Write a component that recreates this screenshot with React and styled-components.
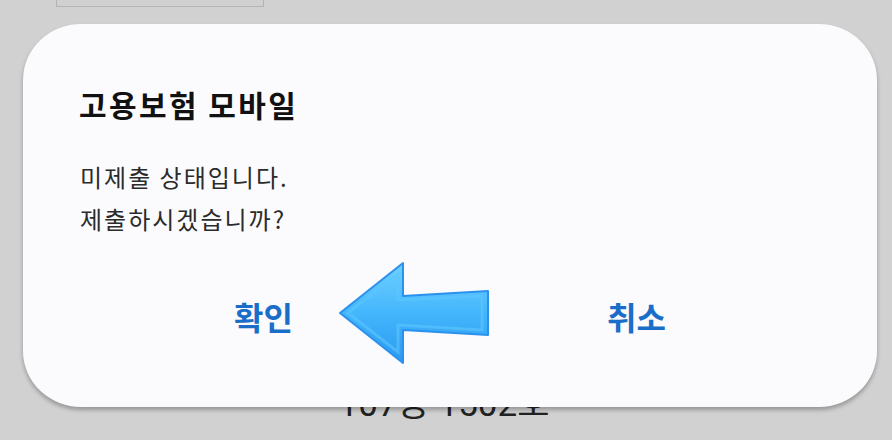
import React from 'react';
import styled, { createGlobalStyle } from 'styled-components';

const Global = createGlobalStyle`
  html, body {
    margin: 0;
    padding: 0;
    background: #d1d1d1;
    overflow: hidden;
  }
  * { box-sizing: border-box; }
`;

const Screen = styled.div`
  position: relative;
  width: 892px;
  height: 440px;
  overflow: hidden;
  background: #d1d1d1;
  font-family: Roboto, "Noto Sans CJK KR", sans-serif;
`;

const Backdrop = styled.div`
  height: 100%;
  display: flex;
  flex-direction: column;
  justify-content: space-between;
`;

const FieldBox = styled.div`
  margin: -41px 0 0 56px;
  width: 208px;
  height: 48px;
  border: 1px solid #b3b3b3;
  background: #d0d0d0;
`;

const Address = styled.div`
  text-align: center;
  padding: 0 0 14px 0;
  font-size: 35px;
  line-height: 42px;
  color: #222;
  margin-left: -4px;
`;

const Dialog = styled.div`
  position: absolute;
  left: 23px;
  top: 24px;
  width: 854px;
  height: 383px;
  border-radius: 58px / 56px;
  background: #fbfbfd;
  box-shadow: 0 3px 4px rgba(0, 0, 0, 0.28);
  display: flex;
  flex-direction: column;
  padding: 60px 0 0;
`;

const Title = styled.h2`
  margin: 0;
  padding: 0 56px;
  font-family: "Noto Sans CJK KR", sans-serif;
  font-weight: 700;
  font-size: 30px;
  line-height: 40px;
  letter-spacing: 2.4px;
  color: #111;
`;

const Message = styled.p`
  margin: 32px 0 0;
  padding: 0 57px;
  font-family: "Noto Sans CJK KR", sans-serif;
  font-size: 24px;
  line-height: 42px;
  letter-spacing: 2px;
  color: #2b2b2b;
`;

const Actions = styled.div`
  margin-top: 54px;
  padding: 0 54px;
  display: grid;
  grid-template-columns: 1fr 1fr;
`;

const ActionButton = styled.button`
  border: none;
  background: none;
  font-family: "Noto Sans CJK KR", sans-serif;
  font-weight: 700;
  font-size: 32px;
  line-height: 44px;
  color: #1a6ec8;
  padding: 0;
  cursor: pointer;
`;

const Pointer = styled.svg`
  position: absolute;
  left: 336px;
  top: 259px;
  width: 156px;
  height: 108px;
`;

function ArrowMark() {
  return (
    <Pointer viewBox="336 259 156 108">
      <defs>
        <linearGradient id="arrowFill" x1="0" y1="0" x2="0" y2="1">
          <stop offset="0" stopColor="#70cfff" />
          <stop offset="0.5" stopColor="#43b6fc" />
          <stop offset="1" stopColor="#2b98f0" />
        </linearGradient>
      </defs>
      <path
        d="M340 313 L403 263 L403 296 L488 291 L488 335 L403 330 L403 363 Z"
        fill="url(#arrowFill)"
        stroke="#2a92ee"
        strokeWidth="2"
        strokeLinejoin="round"
      />
      <path
        d="M348 313 L398 274 L398 300 L482 296 L482 330 L398 325 L398 352 Z"
        fill="none"
        stroke="#5cc6ff"
        strokeWidth="3"
        opacity="0.6"
      />
    </Pointer>
  );
}

export default function App() {
  return (
    <Screen>
      <Global />
      <Backdrop>
        <FieldBox />
        <Address>107동 1502호</Address>
      </Backdrop>
      <Dialog>
        <Title>고용보험 모바일</Title>
        <Message>
          미제출 상태입니다.
          <br />
          제출하시겠습니까?
        </Message>
        <Actions>
          <ActionButton>확인</ActionButton>
          <ActionButton>취소</ActionButton>
        </Actions>
      </Dialog>
      <ArrowMark />
    </Screen>
  );
}
